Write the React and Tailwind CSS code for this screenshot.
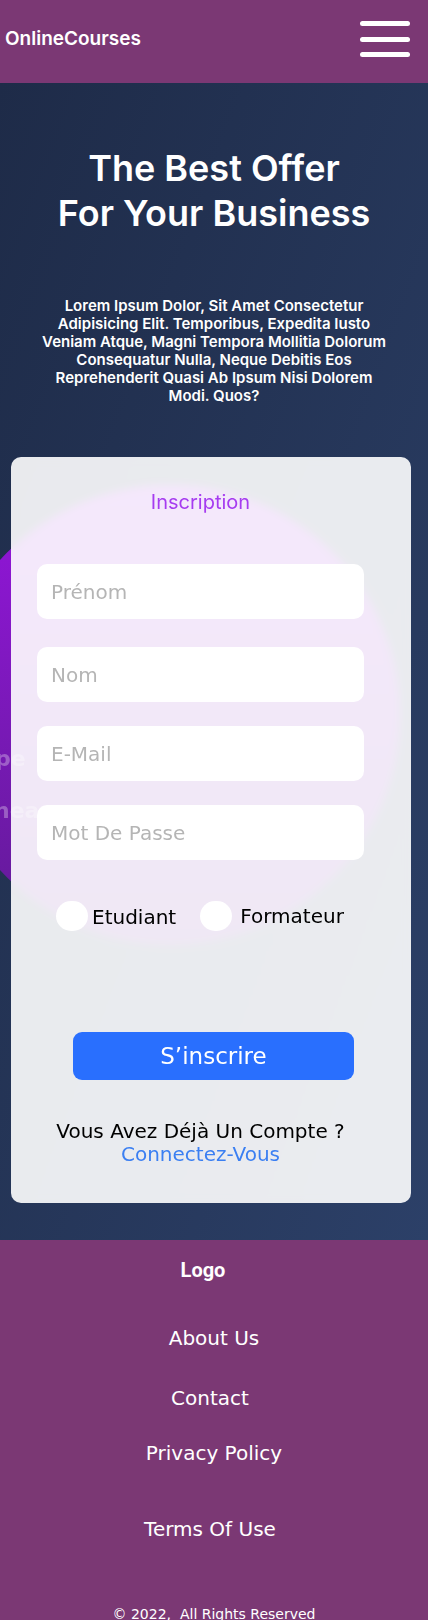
import React from 'react';

const dv = "font-['DejaVu_Sans',sans-serif]";

const Field = ({ placeholder, className = '' }) => (
  <input
    type="text"
    placeholder={placeholder}
    className={`block w-full h-[55px] rounded-[10px] bg-white pl-[14px] text-[20px] text-gray-700 placeholder:text-[#b5b5b5] outline-none ${className}`}
  />
);

const App = () => {
  return (
    <div className={`min-h-screen w-[428px] ${dv}`}>
      {/* Navbar */}
      <nav className="h-[83px] bg-[#7b3874] flex items-center justify-between pl-[5px] pr-[18px] pb-[5px]">
        <span className="font-['Inter',sans-serif] font-semibold text-[19px] text-white">OnlineCourses</span>
        <button className="flex flex-col gap-[10.5px]">
          <span className="block w-[50px] h-[5px] rounded-full bg-white"></span>
          <span className="block w-[50px] h-[5px] rounded-full bg-white"></span>
          <span className="block w-[50px] h-[5px] rounded-full bg-white"></span>
        </button>
      </nav>

      {/* Hero */}
      <section className="relative overflow-hidden bg-linear-to-br from-[#1e2b48] to-[#2c4068] pt-[63px] pb-[37px]">
        <div className="absolute left-[-60px] top-[402px] w-[460px] h-[460px] rounded-full bg-linear-to-b from-[#9414dc] to-[#611a96]"></div>

        <h1 className="relative font-['Inter',sans-serif] font-semibold text-[36px] leading-[45px] text-white text-center">
          The Best Offer
          <br />
          For Your Business
        </h1>
        <p className="relative mt-[61px] font-['Inter',sans-serif] font-semibold text-[15px] leading-[18px] text-white text-center">
          <span className="block">Lorem Ipsum Dolor, Sit Amet Consectetur</span>
          <span className="block">Adipisicing Elit. Temporibus, Expedita Iusto</span>
          <span className="block">Veniam Atque, Magni Tempora Mollitia Dolorum</span>
          <span className="block">Consequatur Nulla, Neque Debitis Eos</span>
          <span className="block">Reprehenderit Quasi Ab Ipsum Nisi Dolorem</span>
          <span className="block">Modi. Quos?</span>
        </p>

        {/* Form card */}
        <div className="relative mt-[52px] ml-[11px] w-[400px] rounded-[10px] bg-white/90 backdrop-blur-[4px] pt-[31px] pb-[37px] pl-[26px] pr-[47px]">
          <h2 className="font-['Inter',sans-serif] text-[20px] leading-[28px] text-[#a63cf0] text-center">Inscription</h2>

          <Field placeholder="Prénom" className="mt-[48px]" />
          <Field placeholder="Nom" className="mt-[28px]" />
          <Field placeholder="E-Mail" className="mt-[24px]" />
          <Field placeholder="Mot De Passe" className="mt-[24px]" />

          <div className="mt-[39px] flex items-center pl-[19px] text-[20px] text-black">
            <span className="w-[32px] h-[30px] rounded-full bg-white"></span>
            <span className="ml-[4px] mt-[3px]">Etudiant</span>
            <span className="ml-[24px] w-[32px] h-[30px] rounded-full bg-white"></span>
            <span className="ml-[8px]">Formateur</span>
          </div>

          <button className="mt-[100px] ml-[36px] w-[281px] h-[48px] rounded-[9px] bg-[#296ffe] text-white text-[23px]">
            S’inscrire
          </button>

          <p className="mt-[40px] text-center text-[20px] leading-[23px] text-black">
            Vous Avez Déjà Un Compte ?
            <br />
            <a href="#" className="text-[#3b7ff2]">Connectez-Vous</a>
          </p>
        </div>

        {/* faded overflow text */}
        <span className="absolute top-[659px] left-[-5px] whitespace-nowrap text-[22px] font-bold text-white/30">pe</span>
        <span className="absolute top-[711px] left-[-6px] whitespace-nowrap text-[22px] font-bold text-white/30">neau</span>
      </section>

      {/* Footer */}
      <footer className="bg-[#7b3874] text-white pt-[18px] pb-[20px] flex flex-col items-center">
        <span className="font-['Roboto',sans-serif] font-bold text-[20px] leading-[24px] mr-[22px]">Logo</span>
        <a href="#" className="mt-[45px] text-[20px] leading-[23px]">About Us</a>
        <a href="#" className="mt-[37px] text-[20px] leading-[23px] mr-[8px]">Contact</a>
        <a href="#" className="mt-[32px] text-[20px] leading-[23px]">Privacy Policy</a>
        <a href="#" className="mt-[53px] text-[20px] leading-[23px] mr-[8px]">Terms Of Use</a>
        <span className="mt-[65px] text-[14px] leading-[16px] whitespace-pre">© 2022,  All Rights Reserved</span>
      </footer>
    </div>
  );
};

export default App;
